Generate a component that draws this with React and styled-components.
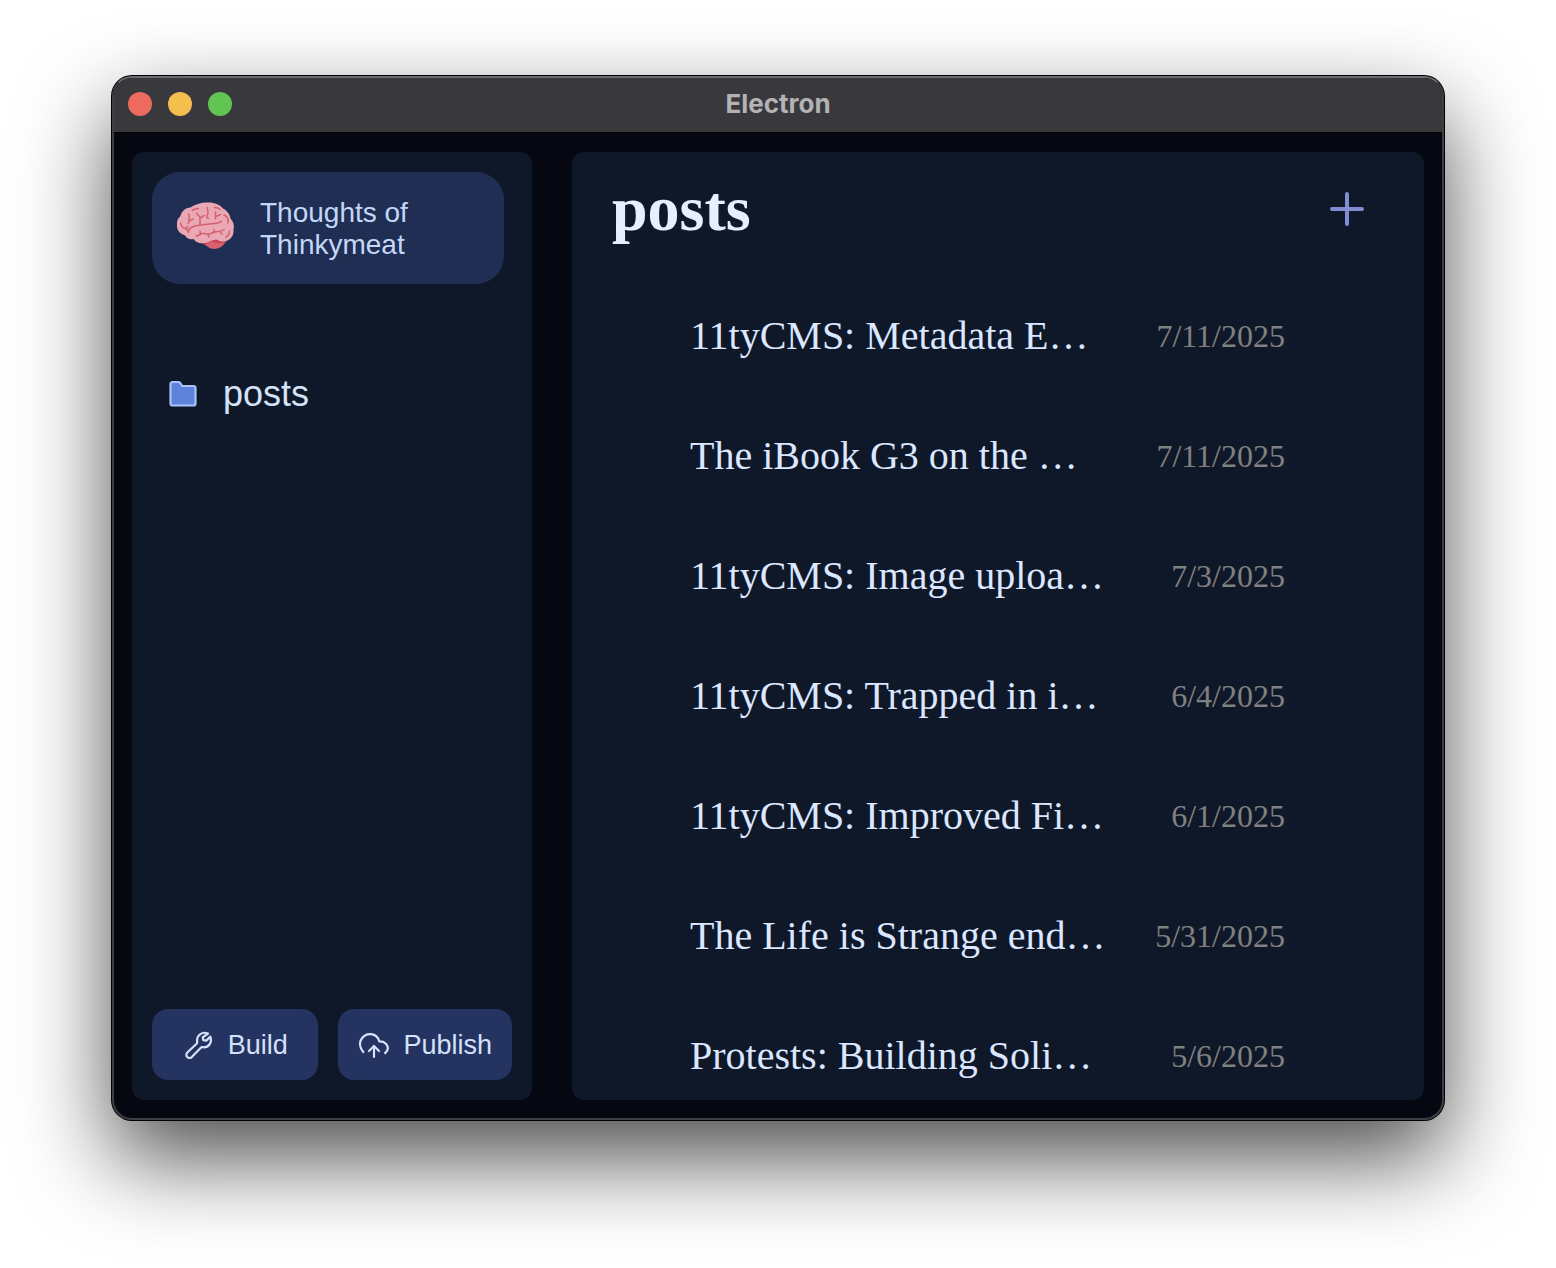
import React from 'react';
import styled, { createGlobalStyle } from 'styled-components';

const GlobalStyle = createGlobalStyle`
  * {
    box-sizing: border-box;
  }
  body {
    margin: 0;
    background: #fff;
  }
  button {
    border: none;
    cursor: pointer;
  }
`;

const Desktop = styled.div`
  display: flex;
  height: 100vh;
  padding: 76px 112px 148px;
  overflow: hidden;
`;

const Window = styled.div`
  flex: 1;
  min-width: 0;
  display: flex;
  flex-direction: column;
  border-radius: 20px;
  overflow: hidden;
  background: #050811;
  border: 2px solid #3e3f45;
  border-top-color: #6c6b70;
  box-shadow: 0 0 0 1px #000, 0 38px 90px rgba(0, 0, 0, 0.7);
`;

const TitleBar = styled.header`
  display: grid;
  grid-template-columns: 1fr auto 1fr;
  align-items: center;
  height: 55px;
  flex-shrink: 0;
  padding: 0 14px 2px;
  background: #39383d;
  border-bottom: 1px solid #000;
`;

const Lights = styled.div`
  display: flex;
  gap: 16px;
`;

const Light = styled.button`
  width: 24px;
  height: 24px;
  padding: 0;
  border-radius: 50%;
  background: ${(props) => props.$color};
`;

const WindowTitle = styled.div`
  font: 700 26px/32px Inter, sans-serif;
  color: #b3b2b5;
`;

const Body = styled.div`
  flex: 1;
  min-height: 0;
  display: flex;
  gap: 40px;
  padding: 19px 18px 18px;
`;

const Sidebar = styled.aside`
  width: 400px;
  flex-shrink: 0;
  display: flex;
  flex-direction: column;
  padding: 20px;
  border-radius: 12px;
  background: #0f1829;
  font-family: 'Liberation Sans', Arial, sans-serif;
`;

const SiteCard = styled.button`
  display: flex;
  align-items: center;
  gap: 24px;
  height: 112px;
  margin-right: 8px;
  padding: 2px 24px 0;
  border-radius: 28px;
  background: #212e54;
  color: #c3d7f8;
  font: 28px/32px 'Liberation Sans', Arial, sans-serif;
  text-align: left;
`;

const Collections = styled.nav`
  flex: 1;
  padding: 86px 16px 0;
`;

const CollectionLink = styled.a`
  display: flex;
  align-items: center;
  gap: 23px;
  font-size: 36px;
  line-height: 48px;
  color: #d5e3f9;
  text-decoration: none;
`;

const Actions = styled.div`
  display: flex;
  gap: 20px;
`;

const ActionButton = styled.button`
  flex: 1;
  display: flex;
  align-items: center;
  justify-content: center;
  gap: 13px;
  height: 71px;
  padding: 0 20px;
  border-radius: 16px;
  background: #243360;
  color: #d3e1fa;
  font: 27px/32px 'Liberation Sans', Arial, sans-serif;

  svg {
    flex-shrink: 0;
  }
`;

const Main = styled.main`
  flex: 1;
  min-width: 0;
  overflow: hidden;
  padding: 20px 40px;
  border-radius: 12px;
  background: #0f1829;
  font-family: 'Liberation Serif', 'Times New Roman', serif;
`;

const MainHeader = styled.div`
  display: flex;
  justify-content: space-between;
  align-items: center;
  height: 74px;
  padding-right: 13px;
`;

const Heading = styled.h1`
  margin: 0;
  font-size: 64px;
  line-height: 74px;
  color: #e6eeff;
`;

const AddButton = styled.button`
  display: flex;
  padding: 0;
  background: none;
  color: #818cd4;
`;

const PostList = styled.ul`
  margin: 30px 0 0;
  padding: 0 99px 0 78px;
  list-style: none;
`;

const PostRow = styled.li`
  display: flex;
  align-items: center;
  justify-content: space-between;
  gap: 40px;
  height: 120px;
`;

const PostTitle = styled.a`
  flex: 0 1 420px;
  min-width: 0;
  overflow: hidden;
  text-overflow: ellipsis;
  white-space: nowrap;
  font-size: 40px;
  line-height: 48px;
  color: #dbe6ff;
  text-decoration: none;
`;

const PostDate = styled.time`
  font-size: 32px;
  line-height: 36px;
  color: #808080;
`;

const posts = [
  { title: '11tyCMS: Metadata E…', date: '7/11/2025' },
  { title: 'The iBook G3 on the …', date: '7/11/2025' },
  { title: '11tyCMS: Image uploa…', date: '7/3/2025' },
  { title: '11tyCMS: Trapped in i…', date: '6/4/2025' },
  { title: '11tyCMS: Improved Fi…', date: '6/1/2025' },
  { title: 'The Life is Strange end…', date: '5/31/2025' },
  { title: 'Protests: Building Soli…', date: '5/6/2025' },
];

const BrainIcon = () => (
  <svg width="60" height="60" viewBox="2 1 60 60" fill="none" aria-hidden="true">
    <path d="M27 44c4 1 5 6 13 7 6 0 10-4 12-8l-12-3z" fill="#d9606d" />
    <path d="M27 44c5-1 9-4 14-3 4 1 7 1 11 0l-1 3c-4 2-7 1-11 0s-6 1-9 3z" fill="#c8434f" />
    <path
      d="M33 4.500c7-.5 13 2 16 6 4 2 7 6 7.500 10 3 3 4 7 3 11 .5 5-2 9-6 11-4 2-8 1-11-1-4 0-7 3-12 3.500-4 1-8 0-11-4-4 1-7-1-9-4-5-1-8-6-7.500-10-.5-4 1-7 3.500-9 1-5 5-8 10-8.500 4-3 10-5 16.500-5z"
      fill="#eaa8b4"
    />
    <g stroke="#d4606e" strokeWidth="1.500" strokeLinecap="round" strokeLinejoin="round">
      <path d="M6.500 25c.5 3 2 5 4.500 5.500 2.500.5 3 2 3.500 4M11 30.500c2-.5 2.500-1 3-2M14.500 34c.5-5 5-6 9-6.500 8-.5 12-2 17-2 3 0 5-1 7-2" />
      <path d="M14.500 16c2 2 0 4 .5 6.500.5 2-1 3-1 3M15 22.500c2 .5 3-.5 4-1.500M23 15c0 3 3 2 3 5v6M26 19.500c2 0 3-1 4-2M33.500 9.500c-1 3 2 4 0 7-1 2-1 3 1 4M41.500 14v7M41.500 18c2 .5 3-1 5-1.500" />
      <path d="M18.500 12.500c1.500-1.500 3.500-2 6-2M40.500 9.500c2.500-.5 4 .5 5.500 2M50 17c3 1 4.500 4 4 8M55.500 33c0 3-1.500 5-3.500 6" />
      <path d="M22 38c3 0 4-2.500 7-2.500s5 1.500 8 0 4-2 7-2 4-.5 6-2M26 36c.5-1 .5-2 0-3M34 36c0 1 .5 2 1 3M40 34.500c-.5-1-.5-2 0-3M46 33.500c.5 1 1 2 2 2.500" />
    </g>
  </svg>
);

const FolderIcon = () => (
  <svg width="32" height="32" viewBox="0 0 32 32" aria-hidden="true">
    <path
      d="M4 4h6.500a2 2 0 0 1 1.600.8L14.200 8H25.500a2 2 0 0 1 2 2v15.500a2 2 0 0 1-2 2H4.500a2 2 0 0 1-2-2v-19.500a2 2 0 0 1 2-2z"
      fill="#5f82da"
      stroke="#a9c3fb"
      strokeWidth="2.200"
      strokeLinejoin="round"
    />
  </svg>
);

const LineIcon = ({ size, viewBox, stroke, children }) => (
  <svg
    width={size}
    height={size}
    viewBox={viewBox}
    fill="none"
    stroke="currentColor"
    strokeWidth={stroke}
    strokeLinecap="round"
    strokeLinejoin="round"
    aria-hidden="true"
  >
    {children}
  </svg>
);

function App() {
  return (
    <>
      <GlobalStyle />
      <Desktop>
        <Window>
          <TitleBar>
            <Lights>
              <Light $color="#ed6a5e" aria-label="Close" />
              <Light $color="#f5bf4f" aria-label="Minimize" />
              <Light $color="#61c554" aria-label="Zoom" />
            </Lights>
            <WindowTitle>Electron</WindowTitle>
          </TitleBar>
          <Body>
            <Sidebar>
              <SiteCard>
                <BrainIcon />
                <span>
                  Thoughts of
                  <br />
                  Thinkymeat
                </span>
              </SiteCard>
              <Collections>
                <CollectionLink href="#posts">
                  <FolderIcon />
                  posts
                </CollectionLink>
              </Collections>
              <Actions>
                <ActionButton>
                  <LineIcon size={32} viewBox="3 2 32 32" stroke={2.2}>
                    <path d="M28 6.500C22.500 4.200 16 8 17.200 15.200c.1.700-.1 1.100-.6 1.600L7.300 25.500a3.200 3.200 0 0 0 4.500 4.600l9-9.400c.5-.5 1-.6 1.600-.5C28.500 21.200 32.500 15.500 30.300 9.600l-4 4-3-.5-.600-2.800z" />
                  </LineIcon>
                  Build
                </ActionButton>
                <ActionButton>
                  <LineIcon size={32} viewBox="4 2 32 32" stroke={2.2}>
                    <path d="M9.300 25C5.500 21 5 15.500 7.800 11.500 12.500 5 22.500 5.500 25.300 14.300c4 0 7 1.700 8.200 5 .8 2.500 0 5-2.300 6.700" />
                    <path d="M20 30V19" />
                    <path d="m15 24 5-5 5 5" />
                  </LineIcon>
                  Publish
                </ActionButton>
              </Actions>
            </Sidebar>
            <Main>
              <MainHeader>
                <Heading>posts</Heading>
                <AddButton aria-label="New post">
                  <LineIcon size={48} viewBox="0 0 24 24" stroke={2}>
                    <path d="M12 4.500v15M4.500 12h15" />
                  </LineIcon>
                </AddButton>
              </MainHeader>
              <PostList>
                {posts.map((post) => (
                  <PostRow key={post.title}>
                    <PostTitle href="#post">{post.title}</PostTitle>
                    <PostDate>{post.date}</PostDate>
                  </PostRow>
                ))}
              </PostList>
            </Main>
          </Body>
        </Window>
      </Desktop>
    </>
  );
}

export default App;
